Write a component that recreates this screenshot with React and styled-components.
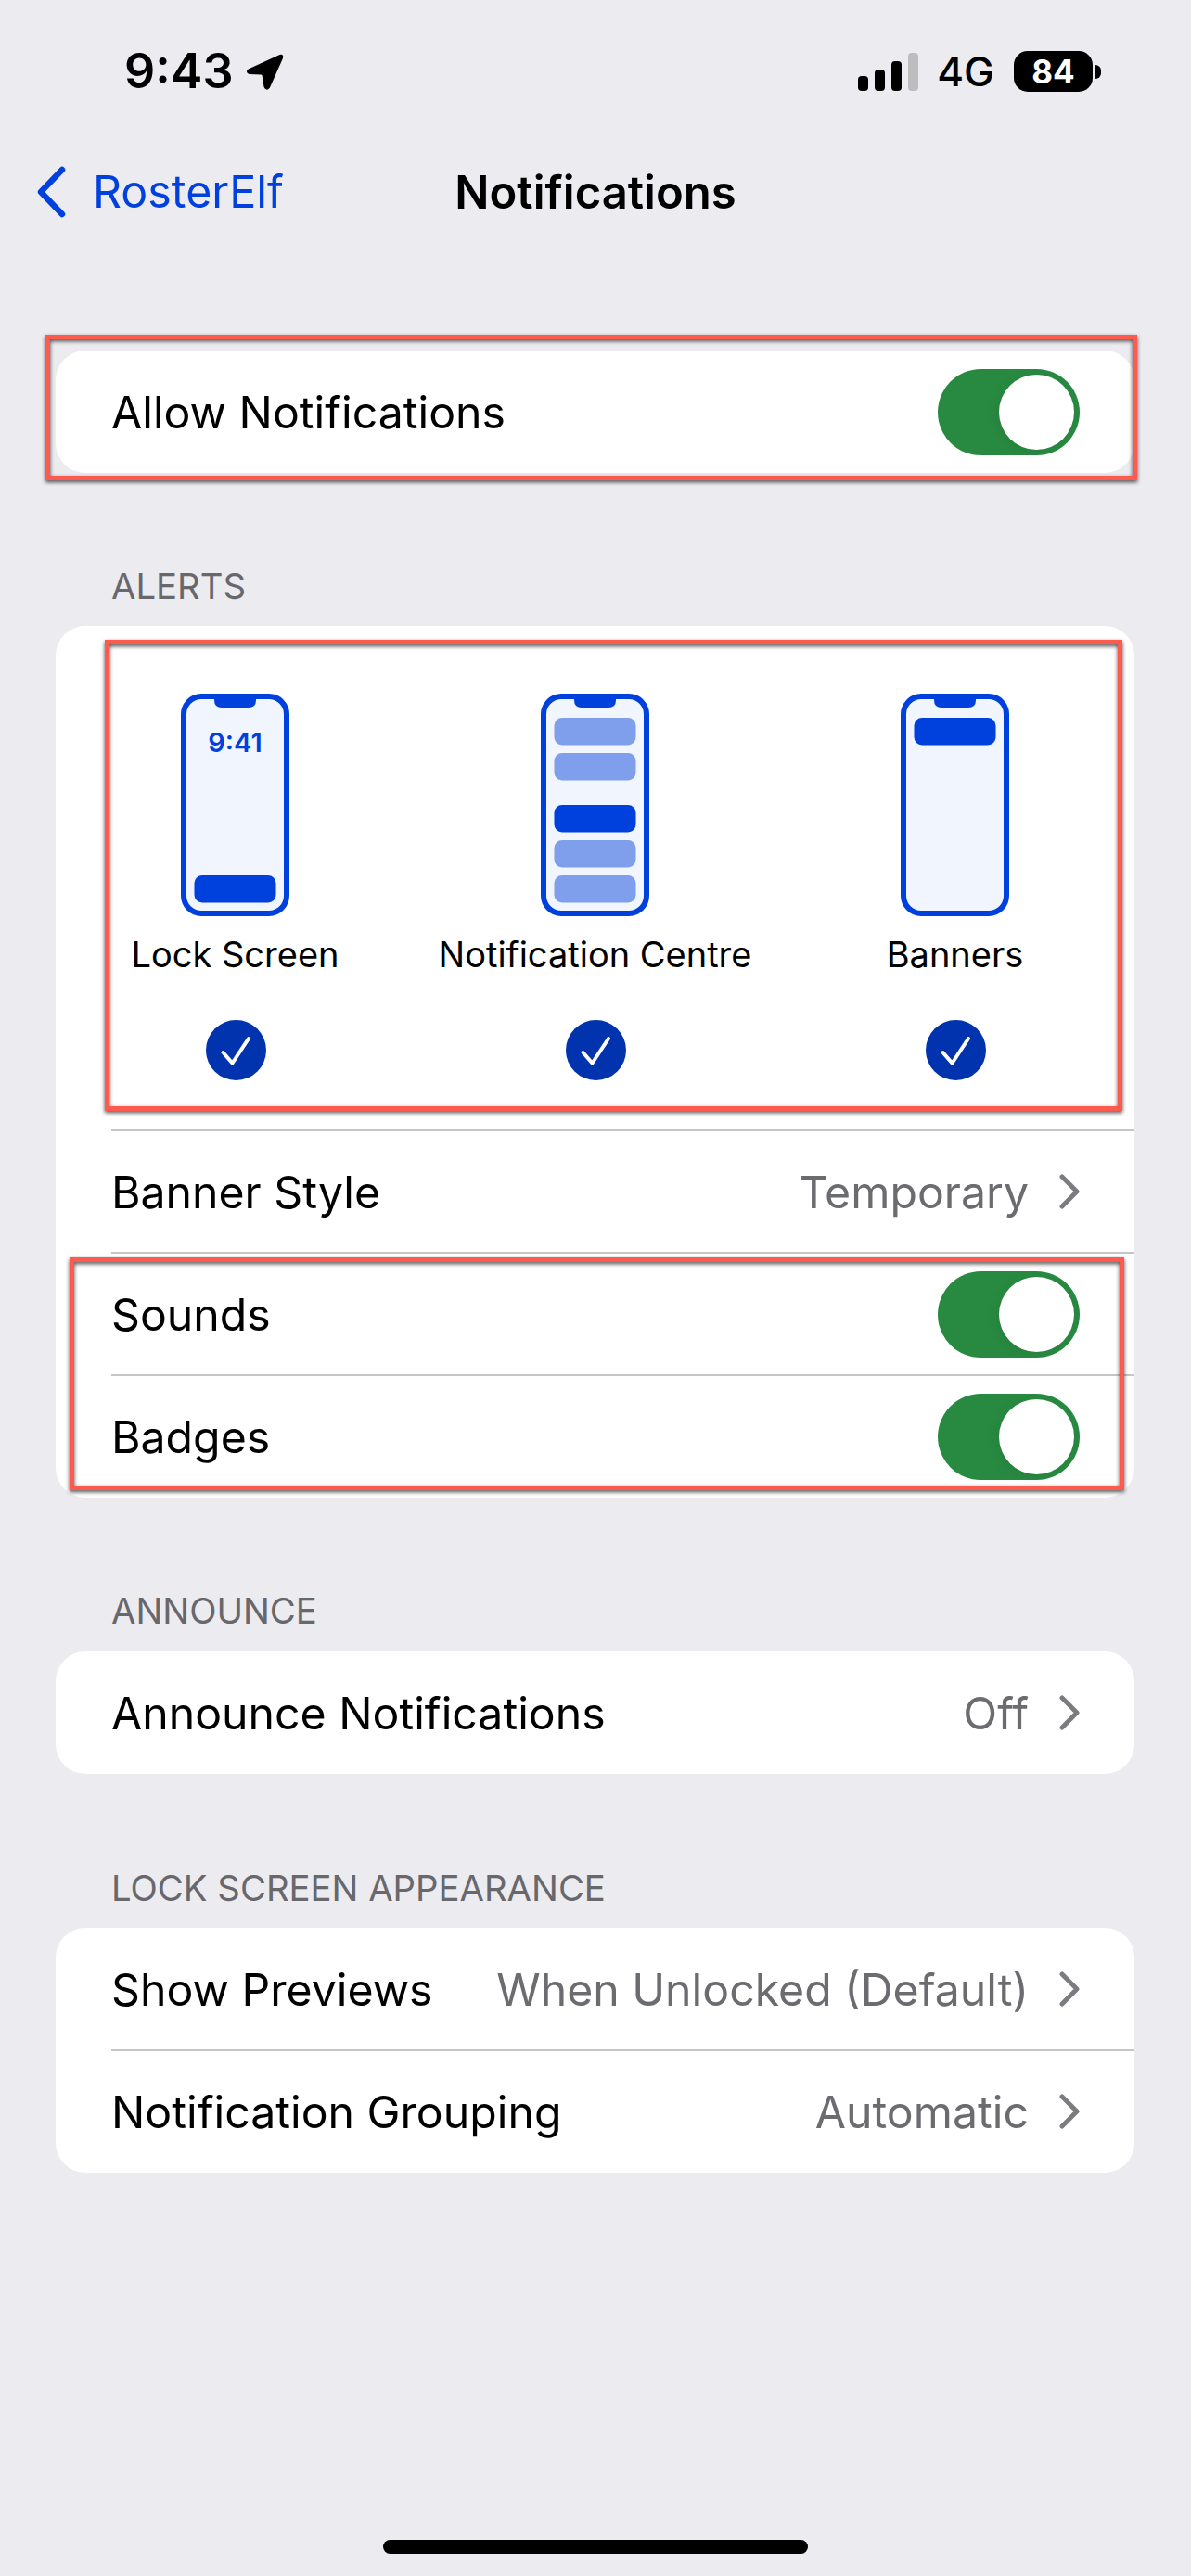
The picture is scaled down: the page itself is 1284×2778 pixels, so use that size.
import styled, { createGlobalStyle } from "styled-components";

const BLUE = "#0040dd";
const GREEN = "#288a41";

const GlobalStyle = createGlobalStyle`
  html, body {
    margin: 0;
    padding: 0;
    background: #ebebf0;
  }
  * {
    box-sizing: border-box;
  }
`;

const Page = styled.div`
  position: relative;
  width: 1284px;
  height: 2778px;
  overflow: hidden;
  background: #ebebf0;
  color: #000;
  font-family: Inter, "Liberation Sans", sans-serif;
`;

const StatusBar = styled.div`
  height: 154px;
  padding: 0 97px 0 134px;
  display: flex;
  align-items: center;
  justify-content: space-between;
`;

const StatusGroup = styled.div`
  display: flex;
  align-items: center;
`;

const Time = styled.span`
  font-size: 52px;
  font-weight: 600;
  line-height: 1;
  margin-right: 13px;
`;

const SignalBars = styled.div`
  display: flex;
  align-items: flex-end;
  gap: 7px;
  height: 41px;
  margin-right: 20px;
`;

const SignalBar = styled.span`
  width: 11px;
  height: ${(p) => p.$height}px;
  border-radius: 4px;
  background: ${(p) => (p.$off ? "#bdbdbf" : "#000")};
`;

const Network = styled.span`
  font-size: 44px;
  font-weight: 500;
  line-height: 1;
  margin-right: 21px;
`;

const Battery = styled.div`
  width: 85px;
  height: 44px;
  border-radius: 15px;
  background: #000;
  color: #fff;
  font-size: 35px;
  font-weight: 700;
  line-height: 44px;
  text-align: center;
  margin-right: 3px;
`;

const BatteryTip = styled.span`
  width: 6px;
  height: 15px;
  border-radius: 0 8px 8px 0;
  background: #000;
`;

const Nav = styled.div`
  height: 106px;
  padding: 0 39px;
  display: grid;
  grid-template-columns: 1fr auto 1fr;
  align-items: center;
`;

const BackLink = styled.div`
  display: flex;
  align-items: center;
  gap: 29px;
  color: ${BLUE};
  font-size: 48.3px;
  line-height: 1;
`;

const Title = styled.div`
  font-size: 49px;
  font-weight: 600;
  line-height: 1;
`;

const Content = styled.div`
  padding: 118px 61px 0 60px;
`;

const Section = styled.section`
  margin-top: ${(p) => p.$gap || 0}px;
`;

const SectionLabel = styled.div`
  height: 40px;
  margin-bottom: ${(p) => p.$after}px;
  padding-left: 60px;
  color: #68686c;
  font-size: 38.3px;
  line-height: 40px;
`;

const Card = styled.div`
  background: #fff;
  border-radius: 32px;
  overflow: hidden;
`;

const Row = styled.div`
  position: relative;
  height: 132px;
  padding: 0 59px 0 60px;
  display: flex;
  align-items: center;
  justify-content: space-between;
  font-size: 48.2px;

  ${(p) =>
    p.$divider &&
    `
    &::before {
      content: "";
      position: absolute;
      top: -1px;
      left: 60px;
      right: 0;
      height: 2px;
      background: #c6c6c8;
    }
  `}
`;

const RowValue = styled.div`
  display: flex;
  align-items: center;
  gap: 33px;
  color: #6c6c70;
`;

const Switch = styled.div`
  width: 153px;
  height: 93px;
  padding: 6px;
  border-radius: 47px;
  background: ${GREEN};
  display: flex;
  justify-content: flex-end;
`;

const Knob = styled.span`
  width: 81px;
  height: 81px;
  border-radius: 50%;
  background: #fff;
  box-shadow: -3px 3px 12px rgba(0, 0, 0, 0.07);
`;

const AlertStyles = styled.div`
  height: 544px;
  padding-top: 73px;
  display: grid;
  grid-template-columns: repeat(3, 388px);
  justify-content: center;
`;

const AlertOption = styled.div`
  display: flex;
  flex-direction: column;
  align-items: center;
`;

const AlertLabel = styled.div`
  height: 44px;
  margin-top: 19px;
  font-size: 38px;
  line-height: 44px;
  white-space: nowrap;
`;

const CheckBadge = styled.svg`
  margin: 49px 0 0 2px;
`;

const HomeIndicator = styled.div`
  position: absolute;
  left: 413px;
  bottom: 24px;
  width: 458px;
  height: 15px;
  border-radius: 8px;
  background: #000;
`;

// the red review boxes drawn on top of the screenshot
const Highlight = styled.div`
  position: absolute;
  top: ${(p) => p.$top}px;
  left: ${(p) => p.$left}px;
  width: ${(p) => p.$width}px;
  height: ${(p) => p.$height}px;
  border: 5px solid #ff5a4e;
  filter: drop-shadow(0 2px 2px rgba(0, 0, 0, 0.7));
`;

const Chevron = () => (
  <svg width="22" height="38" viewBox="0 0 22 38" fill="none">
    <path
      d="M3 3 L19 19 L3 35"
      stroke="#7c7c80"
      strokeWidth="5"
      strokeLinecap="round"
      strokeLinejoin="round"
    />
  </svg>
);

const PhoneBar = ({ y, light }) => (
  <rect x="14.5" y={y} width="88" height="29.5" rx="8.5" fill={light ? "#7f9fec" : BLUE} />
);

const Phone = ({ children }) => (
  <svg width="117" height="240" viewBox="0 0 117 240">
    <rect x="3" y="3" width="111" height="234" rx="19" fill="#f0f5fe" stroke={BLUE} strokeWidth="6" />
    <path d="M36 4 H81 V7 Q81 15 73 15 H44 Q36 15 36 7 Z" fill={BLUE} />
    {children}
  </svg>
);

const Check = () => (
  <CheckBadge width="65" height="65" viewBox="0 0 65 65">
    <circle cx="32.5" cy="32.5" r="32.5" fill="#0033ad" />
    <path
      d="M18.5 35 L28.5 46.5 L46 20"
      fill="none"
      stroke="#fff"
      strokeWidth="4"
      strokeLinecap="round"
      strokeLinejoin="round"
    />
  </CheckBadge>
);

const Toggle = () => (
  <Switch>
    <Knob />
  </Switch>
);

const alertOptions = [
  {
    label: "Lock Screen",
    art: (
      <>
        <text x="58.5" y="63" textAnchor="middle" fontSize="29" fontWeight="600" fill={BLUE}>
          9:41
        </text>
        <PhoneBar y={196} />
      </>
    ),
  },
  {
    label: "Notification Centre",
    art: (
      <>
        <PhoneBar y={26} light />
        <PhoneBar y={64} light />
        <PhoneBar y={120} />
        <PhoneBar y={158} light />
        <PhoneBar y={196} light />
      </>
    ),
  },
  { label: "Banners", art: <PhoneBar y={26} /> },
];

const App = () => {
  return (
    <Page>
      <GlobalStyle />
      <StatusBar>
        <StatusGroup>
          <Time>9:43</Time>
          <svg width="42" height="41" viewBox="0 0 42 41">
            <path
              d="M3 18.5 L37 3 Q40 2 39 5.500 L25 37 Q22 40.500 20.500 36.500 L18.500 24 Q18 22.500 16.500 22.500 L4 22 Q0.500 20.500 3 18.500 Z"
              fill="#000"
              stroke="#000"
              strokeWidth="2"
              strokeLinejoin="round"
            />
          </svg>
        </StatusGroup>
        <StatusGroup>
          <SignalBars>
            <SignalBar $height={16} />
            <SignalBar $height={23} />
            <SignalBar $height={32} />
            <SignalBar $height={41} $off />
          </SignalBars>
          <Network>4G</Network>
          <Battery>84</Battery>
          <BatteryTip />
        </StatusGroup>
      </StatusBar>

      <Nav>
        <BackLink>
          <svg width="32" height="56" viewBox="0 0 32 56" fill="none">
            <path
              d="M28 4 L5 28 L28 52"
              stroke={BLUE}
              strokeWidth="6.500"
              strokeLinecap="round"
              strokeLinejoin="round"
            />
          </svg>
          RosterElf
        </BackLink>
        <Title>Notifications</Title>
      </Nav>

      <Content>
        <Section>
          <Card>
            <Row>
              Allow Notifications
              <Toggle />
            </Row>
          </Card>
        </Section>

        <Section $gap={102}>
          <SectionLabel $after={23}>ALERTS</SectionLabel>
          <Card>
            <AlertStyles>
              {alertOptions.map((option) => (
                <AlertOption key={option.label}>
                  <Phone>{option.art}</Phone>
                  <AlertLabel>{option.label}</AlertLabel>
                  <Check />
                </AlertOption>
              ))}
            </AlertStyles>
            <Row $divider>
              Banner Style
              <RowValue>
                Temporary
                <Chevron />
              </RowValue>
            </Row>
            <Row $divider>
              Sounds
              <Toggle />
            </Row>
            <Row $divider>
              Badges
              <Toggle />
            </Row>
          </Card>
        </Section>

        <Section $gap={102}>
          <SectionLabel $after={24}>ANNOUNCE</SectionLabel>
          <Card>
            <Row>
              Announce Notifications
              <RowValue>
                Off
                <Chevron />
              </RowValue>
            </Row>
          </Card>
        </Section>

        <Section $gap={103}>
          <SectionLabel $after={23}>LOCK SCREEN APPEARANCE</SectionLabel>
          <Card>
            <Row>
              Show Previews
              <RowValue>
                When Unlocked (Default)
                <Chevron />
              </RowValue>
            </Row>
            <Row $divider>
              Notification Grouping
              <RowValue>
                Automatic
                <Chevron />
              </RowValue>
            </Row>
          </Card>
        </Section>
      </Content>

      <Highlight $top={361} $left={49} $width={1177} $height={157} />
      <Highlight $top={690} $left={113} $width={1097} $height={508} />
      <Highlight $top={1356} $left={75} $width={1137} $height={251} />

      <HomeIndicator />
    </Page>
  );
};

export default App;
